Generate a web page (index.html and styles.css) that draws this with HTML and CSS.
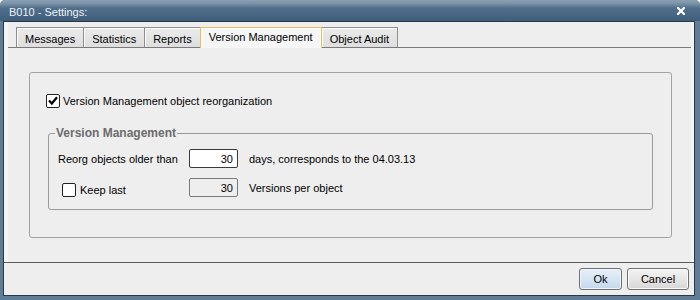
FILE: index.html
```html
<!DOCTYPE html>
<html lang="en">
<head>
    <meta charset="UTF-8">
    <title>B010 - Settings:</title>
    <link rel="stylesheet" href="styles.css">
</head>
<body>
    <div class="window">
        <div class="titlebar">
            <span class="title">B010 - Settings:</span>
            <svg class="close" width="8" height="8" viewBox="0 0 8 8">
                <path d="M1 1 L7 7 M7 1 L1 7" stroke="#fff" stroke-width="2.2" stroke-linecap="square"/>
            </svg>
        </div>
        <div class="client">
            <div class="tab-area">
                <div class="tabs">
                    <div class="tab">Messages</div>
                    <div class="tab">Statistics</div>
                    <div class="tab">Reports</div>
                    <div class="tab active">Version Management</div>
                    <div class="tab">Object Audit</div>
                </div>
                <div class="tab-page">
                    <div class="group">
                        <label class="check-row">
                            <span class="checkbox">
                                <svg width="12" height="12" viewBox="0 0 12 12"><path d="M2 5.5 L4.8 8.5 L10 2.2" fill="none" stroke="#000" stroke-width="2.2"/></svg>
                            </span>
                            Version Management object reorganization
                        </label>
                        <fieldset class="subgroup">
                            <legend>Version Management</legend>
                            <div class="rows">
                                <span>Reorg objects older than</span>
                                <span class="field">30</span>
                                <span>days, corresponds to the 04.03.13</span>

                                <label class="keep"><span class="checkbox"></span>Keep last</label>
                                <span class="field disabled">30</span>
                                <span>Versions per object</span>
                            </div>
                        </fieldset>
                    </div>
                </div>
            </div>
            <div class="footer">
                <button class="btn ok">Ok</button>
                <button class="btn cancel">Cancel</button>
            </div>
        </div>
    </div>
</body>
</html>
```

FILE: styles.css
```css
* {
    box-sizing: border-box;
}
body {
    margin: 0;
    background: #fff;
    font-family: "Liberation Sans", Arial, sans-serif;
    font-size: 11px;
    color: #000;
}
.window {
    width: 700px;
    height: 300px;
    display: flex;
    flex-direction: column;
    background: #607d97;
    border-radius: 5px 5px 0 0;
    overflow: hidden;
}
.titlebar {
    height: 21px;
    flex: none;
    display: flex;
    align-items: center;
    justify-content: space-between;
    padding: 2px 15px 0 9px;
    background: linear-gradient(#8ba1b4 0, #7890a5 4px, #4f6f8b 8px, #3e5e7b 21px);
    color: #eef2f6;
}
.close {
    margin-top: -1px;
}
.client {
    flex: 1;
    margin: 0 5px 4px 3px;
    border: 1px solid #2b3947;
    background: #f4f4f4;
    display: flex;
    flex-direction: column;
}
.tab-area {
    flex: 1;
    display: flex;
    flex-direction: column;
    margin: 0 3px 0 4px;
}
.tabs {
    display: flex;
    align-items: flex-end;
    height: 25px;
    padding-left: 8px;
    background: #eeeeee;
}
.tab {
    height: 20px;
    padding: 2px 8px 0;
    border: 1px solid #8e8e8e;
    border-bottom: none;
    background: linear-gradient(#ebebeb, #dedede);
    box-shadow: inset 1px 1px 0 #fbfbfb;
    display: flex;
    align-items: center;
}
.tab + .tab {
    margin-left: -1px;
}
.tab.active {
    position: relative;
    z-index: 1;
    height: 21px;
    margin-bottom: -1px;
    padding: 0 8px 2px;
    border-color: #e9bd55;
    background: #f6f6f6;
    box-shadow: inset 1px 1px 0 #fff, inset -1px 0 0 #fff;
}
.tab-page {
    flex: 1;
    border-top: 1px solid #7a7a7a;
    background: #eeeeee;
    padding: 24px 19px 0 21px;
}
.group {
    height: 166px;
    border: 1px solid #a3a3a3;
    border-radius: 3px;
    padding: 21px 18px 0 16px;
}
.check-row {
    display: flex;
    align-items: center;
    gap: 3px;
    height: 14px;
}
.checkbox {
    width: 14px;
    height: 14px;
    flex: none;
    border: 1px solid #222;
    border-radius: 2px;
    background: #fff;
    display: flex;
    align-items: center;
    justify-content: center;
}
.subgroup {
    margin: 18px 0 0 2px;
    padding: 9px 8px 12px 9px;
    border: 1px solid #9b9b9b;
    border-radius: 3px;
    min-width: 0;
}
.subgroup legend {
    margin-left: -3px;
    padding: 0 1px;
    color: #6c6c6c;
    font-weight: bold;
    font-size: 12px;
    line-height: 14px;
}
.rows {
    display: grid;
    grid-template-columns: 120px 49px auto;
    grid-auto-rows: 19px;
    column-gap: 11px;
    row-gap: 10px;
    align-items: center;
}
.keep {
    display: flex;
    align-items: center;
    gap: 4px;
    padding-left: 4px;
    margin-top: 4px;
}
.field {
    height: 19px;
    border: 1px solid #3a3a3a;
    border-radius: 2px;
    background: #fff;
    text-align: right;
    padding-right: 4px;
    line-height: 18px;
}
.field.disabled {
    background: #eeeeee;
    border-color: #7a7a7a;
}
.footer {
    height: 33px;
    flex: none;
    display: flex;
    justify-content: flex-end;
    gap: 5px;
    padding: 5px 5px 0 0;
    border-top: 1px solid #5c5c5c;
    background: #eeeeee;
}
.btn {
    height: 22px;
    border: 1px solid #707070;
    border-radius: 3px;
    font-family: inherit;
    font-size: 11px;
    color: #000;
    padding: 0;
}
.btn.ok {
    width: 43px;
    background: linear-gradient(#e6f0f9, #d6e5f3 50%, #c3d8ec);
    box-shadow: inset 0 0 0 1px #eef5fc;
}
.btn.cancel {
    width: 62px;
    background: linear-gradient(#f3f3f3, #e6e6e6 50%, #d6d6d6);
    box-shadow: inset 0 0 0 1px #fafafa;
}
```
